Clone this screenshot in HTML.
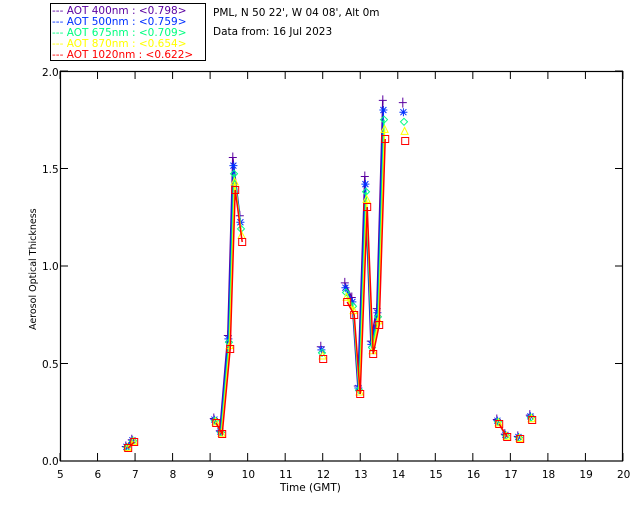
<!DOCTYPE html>
<html><head><meta charset="utf-8"><style>
html,body{margin:0;padding:0;background:#fff;}
svg{display:block;font-family:"DejaVu Sans","Liberation Sans",sans-serif;}
</style></head><body>
<svg id="s" width="640" height="512" viewBox="0 0 640 512" xmlns="http://www.w3.org/2000/svg">
<rect x="0" y="0" width="640" height="512" fill="#fff"/>
<rect x="50.5" y="3.5" width="155" height="57" fill="#fff" stroke="#000" stroke-width="1"/>
<g font-size="10.5">
<text x="52" y="14" fill="#5a00a0">--- AOT  400nm : &lt;0.798&gt;</text>
<text x="52" y="25" fill="#0030ff">--- AOT  500nm : &lt;0.759&gt;</text>
<text x="52" y="36" fill="#00ff80">--- AOT  675nm : &lt;0.709&gt;</text>
<text x="52" y="47" fill="#ffff00">--- AOT  870nm : &lt;0.654&gt;</text>
<text x="52" y="58" fill="#ff0000">--- AOT 1020nm : &lt;0.622&gt;</text>
<text x="213" y="16" fill="#000">PML, N 50 22', W 04 08', Alt 0m</text>
<text x="213" y="35" fill="#000">Data from: 16 Jul 2023</text>
</g>
<rect x="60.5" y="71.5" width="562" height="389.5" fill="none" stroke="#000" stroke-width="1.2"/>
<g id="ax" stroke="#000" stroke-width="1"></g>
<g font-size="10.5" fill="#000" id="lab">
<text x="42" y="465">0.0</text><text x="42" y="368">0.5</text><text x="42" y="270">1.0</text><text x="42" y="173">1.5</text><text x="42" y="76">2.0</text>
<text x="280" y="491">Time (GMT)</text>
<text transform="translate(36,330) rotate(-90)" font-size="9.5">Aerosol Optical Thickness</text>
</g>
<g id="data"></g>
</svg>
<script>
var ns="http://www.w3.org/2000/svg",s=document.getElementById('s'),ax=document.getElementById('ax'),lab=document.getElementById('lab'),dg=document.getElementById('data');
function el(p,t,a){var e=document.createElementNS(ns,t);for(var k in a)e.setAttribute(k,a[k]);p.appendChild(e);return e;}
for(var h=5;h<=20;h++){var x=60+(h-5)*37.53;
 el(ax,'line',{x1:x,y1:461,x2:x,y2:453});el(ax,'line',{x1:x,y1:71,x2:x,y2:79});
 var t=el(lab,'text',{x:x-(h>=10?6:3),y:478});t.textContent=h;}
for(var v=0;v<=2;v+=0.5){var y=461-195*v;el(ax,'line',{x1:60,y1:y,x2:68,y2:y});el(ax,'line',{x1:623,y1:y,x2:615,y2:y});}
var segs=[[[127,448],[133,442]],[[215,423],[221,434],[229,349],[234,190],[241,242]],[[322,359]],[[346,302],[353,315],[359,394],[366,207],[372,354],[378,325],[384,139]],[[404,141]],[[498,424],[506,437]],[[519,439]],[[531,420]]];
var ser=[{c:'#5a00a0',f:1.12,m:'plus'},{c:'#0030ff',f:1.09,m:'ast'},{c:'#00ff80',f:1.06,m:'dia'},{c:'#ffff00',f:1.03,m:'tri'},{c:'#ff0000',f:1,m:'sq'}];
ser.forEach(function(S,i){segs.forEach(function(sg){var pts=sg.map(function(p){var y=461-(461-p[1])*S.f;if(y<73)y=73;return [p[0]+(i-2)*0.6,y];});
 if(pts.length>1)el(dg,'polyline',{points:pts.map(function(p){return p.join(',')}).join(' '),fill:'none',stroke:S.c,'stroke-width':1.5});
 pts.forEach(function(p){var x=p[0],y=p[1],a={fill:'none',stroke:S.c,'stroke-width':1};
  if(S.m=='plus'){el(dg,'path',Object.assign({d:'M'+(x-4)+' '+y+'H'+(x+4)+'M'+x+' '+(y-5)+'V'+(y+5)},a));}
  else if(S.m=='ast'){el(dg,'path',Object.assign({d:'M'+(x-4)+' '+y+'H'+(x+4)+'M'+x+' '+(y-4)+'V'+(y+4)+'M'+(x-3)+' '+(y-3)+'L'+(x+3)+' '+(y+3)+'M'+(x-3)+' '+(y+3)+'L'+(x+3)+' '+(y-3),'stroke-width':1.5},a));}
  else if(S.m=='dia'){el(dg,'path',Object.assign({d:'M'+x+' '+(y-3.5)+'L'+(x+3.5)+' '+y+'L'+x+' '+(y+3.5)+'L'+(x-3.5)+' '+y+'Z'},a));}
  else if(S.m=='tri'){el(dg,'path',Object.assign({d:'M'+x+' '+(y-4)+'L'+(x+3.5)+' '+(y+3)+'L'+(x-3.5)+' '+(y+3)+'Z'},a));}
  else {el(dg,'rect',Object.assign({x:x-3.5,y:y-3.5,width:7,height:7,'stroke-width':1.3},a));}
 });});});
</script>
</body></html>
